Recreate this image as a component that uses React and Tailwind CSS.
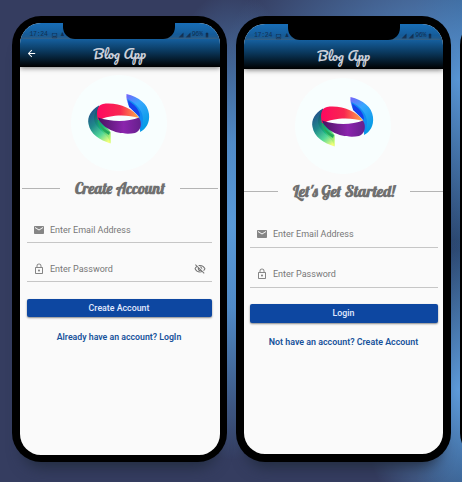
import { MdEmail, MdLockOutline, MdOutlineVisibilityOff, MdArrowBack, MdOutlineImage, MdSignalCellular4Bar, MdBatteryFull } from 'react-icons/md';

function Logo() {
  return (
    <svg viewBox="0 0 120 105" className="h-[105px] w-[120px]">
      <defs>
        <linearGradient id="red" x1="0" x2="1"><stop offset="0" stopColor="#ff0860" /><stop offset=".55" stopColor="#f82750" /><stop offset="1" stopColor="#ffad4b" /></linearGradient>
        <linearGradient id="purple" x1="0" x2="1"><stop offset="0" stopColor="#481460" /><stop offset=".6" stopColor="#8b24ad" /><stop offset="1" stopColor="#65208c" /></linearGradient>
        <linearGradient id="green" x1=".3" y1="0" x2=".8" y2="1"><stop offset="0" stopColor="#244c8b" /><stop offset=".4" stopColor="#208a8b" /><stop offset=".72" stopColor="#52d899" /><stop offset="1" stopColor="#f4ff78" /></linearGradient>
        <linearGradient id="mint" x1=".2" y1="0" x2=".8" y2="1"><stop offset="0" stopColor="#164f74" /><stop offset=".55" stopColor="#18b980" /><stop offset="1" stopColor="#c8fa70" /></linearGradient>
        <linearGradient id="sky" x1="0" y1="0" x2=".5" y2="1"><stop offset="0" stopColor="#7961fa" /><stop offset=".4" stopColor="#38a7ff" /><stop offset="1" stopColor="#079ce5" /></linearGradient>
      </defs>
      <circle cx="59" cy="53" r="48" fill="#f8fefe" />
      <path d="M39 35.500C31 40 27 47 28.500 54C30 64 40 70 50.500 73.500L50.500 62L39 48Z" fill="url(#green)" />
      <path d="M38.500 37C33 44 33 51 37 56C41 62 48 64 50.500 73.500L50.500 62L39 48Z" fill="url(#mint)" />
      <path d="M38 45C37 52 42 58 50 62L49 65C42 61 36 54 38 45Z" fill="#25a95d" />
      <path d="M66.500 24C79 27 88 34 89 44C90 53 86 59 80 62L81 49L69 36C67 32 66 28 66.500 24Z" fill="url(#sky)" />
      <path d="M67.500 29C76 33 83 41 83 49C83 54 82 59 80 61L79 47L69 36Z" fill="#118bf2" />
      <path d="M68 30.500C75 35 80 40 80 47L69 37Z" fill="#1740eb" />
      <path d="M38 50C36 42 37 35 43 34C57 32 73 38 79 48C68 44 48 44.500 40 50Z" fill="url(#red)" />
      <path d="M38 47.500C51 52 68 52 79 47.500C82.500 53 81 61 75 63C60 66 42 59 38 47.500Z" fill="url(#purple)" />
    </svg>
  );
}

function Field({ icon, label, hidden, className }) {
  return (
    <div className={`flex items-center border-b border-[#c6c6c6] text-[#858585] ${className}`}>
      <span className="w-[17.500px] shrink-0">{icon}</span>
      <span className="grow pt-px whitespace-nowrap text-[9px] text-[#777]">{label}</span>
      {hidden && <MdOutlineVisibilityOff size={12} className="mr-1.5 text-[#747474]" />}
    </div>
  );
}

function Script({ children, width, heading }) {
  return (
    <svg width={width} height="28" className="block shrink-0 overflow-visible">
      <text x="0" y={heading ? 20 : 19.5} textLength={width} lengthAdjust="spacingAndGlyphs"
        className={heading ? "fill-[#707070] font-['Lobster','Liberation_Serif',serif] text-[15.500px] font-bold" : "fill-[#cbd0da] font-['Pacifico','Liberation_Serif',serif] text-[12px]"}>{children}</text>
    </svg>
  );
}

function Phone({ signup }) {
  return (
    <section className={`relative h-[446px] w-[215px] shrink-0 rounded-[29px] bg-black shadow-[0_16px_16px_-12px_#202a3c] ${signup ? 'pt-[7px] pl-[7.500px]' : 'pt-2 pl-2'}`}>
      <div className={`overflow-hidden rounded-[21px] bg-[#fafafa] ${signup ? 'h-[432px] w-[200px]' : 'h-[430px] w-[199px]'}`}>
        <div className="flex h-4 items-end justify-between bg-[linear-gradient(#186eb8,#14558d)] px-2.5 font-['Liberation_Mono',monospace] text-[6.500px] leading-[8px] text-[#102f52]">
          <span className="flex items-center gap-[3px] whitespace-nowrap"><span className="w-[18px] tracking-[-0.300px]">17:24</span><MdOutlineImage size={7} className="shrink-0" /><span>♟</span></span>
          <span className="flex items-center gap-px"><MdSignalCellular4Bar size={6} /><MdSignalCellular4Bar size={6} /><span className="tracking-[-0.300px]">96%</span><MdBatteryFull size={6} /></span>
        </div>
        <header className={`relative flex items-start justify-center bg-[linear-gradient(#155f9e,#0a375b_45%,#000)] shadow-[0_1px_5px_#777] ${signup ? 'h-7' : 'h-[29px] pt-px'}`}>
          {signup && <MdArrowBack size={11} className="absolute top-[9px] left-[6px] text-white" />}
          <Script width={53}>Blog App</Script>
        </header>
        <div className={`flex justify-center ${signup ? 'mt-[3px]' : 'mt-1'}`}><Logo /></div>
        <div className={`flex items-center ${signup ? 'mt-[-1px] gap-[15px] px-0.5' : '-mt-px gap-[15px]'}`}>
          <i className="h-px grow bg-[#b4b4b4]" />
          <Script width={signup ? 90 : 102} heading>{signup ? 'Create Account' : "Let's Get Started!"}</Script>
          <i className="h-px grow bg-[#b4b4b4]" />
        </div>
        <div className={signup ? 'pr-2 pl-[7px]' : 'px-[5.500px]'}>
          <Field className={signup ? 'mt-4 h-[25px] pl-[6px]' : 'mt-4 h-[27px] pl-[6px]'} icon={<MdEmail size={12} />} label="Enter Email Address" />
          <Field className={signup ? 'mt-[14px] h-[25px] pl-[6px]' : 'mt-[13px] h-[27px] pl-[6px]'} icon={<MdLockOutline size={12} />} label="Enter Password" hidden={signup} />
          <button className={`block w-full rounded-[2px] bg-[#0d47a1] pt-px text-center text-[8.800px] font-medium text-[#e2eaff] shadow-[0_1px_2px_#888] ${signup ? 'mt-[17px] h-[18px]' : 'mt-4 h-[19px]'}`}>{signup ? 'Create Account' : 'Login'}</button>
          <p className={`text-center leading-[13px] font-semibold whitespace-nowrap text-[#17529b] ${signup ? 'mt-[14px] text-[8.750px]' : 'mt-[13px] text-[8.900px]'}`}>{signup ? 'Already have an account? LogIn' : 'Not have an account? Create Account'}</p>
        </div>
      </div>
      <div className={`absolute top-0 w-[112px] rounded-b-[12px] bg-black ${signup ? 'left-[51px] h-[23px]' : 'left-[52px] h-[24px]'}`} />
    </section>
  );
}

export default function App() {
  return (
    <main className="flex h-[482px] w-[462px] gap-[9px] overflow-hidden bg-[#353d60] bg-[radial-gradient(ellipse_90px_235px_at_232px_225px,#5d9edd,#538fcc_35%,transparent),radial-gradient(ellipse_100px_150px_at_458px_390px,#5d9bda,transparent),radial-gradient(ellipse_240px_170px_at_458px_80px,#5795d5,transparent),linear-gradient(90deg,transparent_90%,#294770)] pt-4 pl-3 font-['Roboto',sans-serif]">
      <Phone signup />
      <Phone />
      <div className="h-[446px] w-[215px] shrink-0 rounded-[29px] bg-black" />
    </main>
  );
}
